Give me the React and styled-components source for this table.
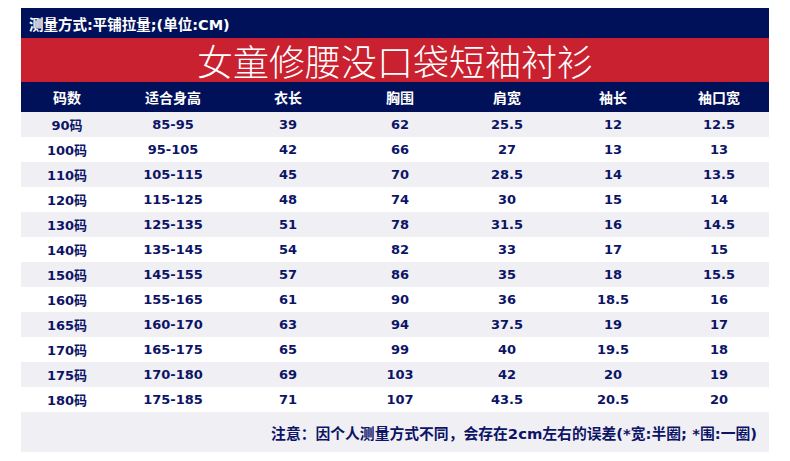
import React from 'react';
import styled, { createGlobalStyle } from 'styled-components';

const rows = [
	['90码', '85-95', '39', '62', '25.5', '12', '12.5'],
	['100码', '95-105', '42', '66', '27', '13', '13'],
	['110码', '105-115', '45', '70', '28.5', '14', '13.5'],
	['120码', '115-125', '48', '74', '30', '15', '14'],
	['130码', '125-135', '51', '78', '31.5', '16', '14.5'],
	['140码', '135-145', '54', '82', '33', '17', '15'],
	['150码', '145-155', '57', '86', '35', '18', '15.5'],
	['160码', '155-165', '61', '90', '36', '18.5', '16'],
	['165码', '160-170', '63', '94', '37.5', '19', '17'],
	['170码', '165-175', '65', '99', '40', '19.5', '18'],
	['175码', '170-180', '69', '103', '42', '20', '19'],
	['180码', '175-185', '71', '107', '43.5', '20.5', '20'],
];

const headers = ['码数', '适合身高', '衣长', '胸围', '肩宽', '袖长', '袖口宽'];

function App() {
	return (
		<>
			<GlobalStyle />
			<Chart>
				<TopBar>测量方式:平铺拉量;(单位:CM)</TopBar>
				<TitleBar>女童修腰没口袋短袖衬衫</TitleBar>
				<HeadRow>
					{headers.map(h => <HeadCell key={h}>{h}</HeadCell>)}
				</HeadRow>
				{rows.map((row, i) => (
					<DataRow key={row[0]} shaded={i % 2 === 0}>
						{row.map((val, j) => <DataCell key={j}>{val}</DataCell>)}
					</DataRow>
				))}
				<Note>注意：因个人测量方式不同，会存在2cm左右的误差(*宽:半圈; *围:一圈)</Note>
			</Chart>
		</>
	);
}

const GlobalStyle = createGlobalStyle`
	body {
		margin: 0;
		background: #fff;
		font-family: "DejaVu Sans", "Noto Sans CJK SC", sans-serif;
	}
`;

const Chart = styled.div`
	width: 748px;
	margin: 8px 0 0 21px;
`;

const TopBar = styled.div`
	height: 30px;
	background: #00115a;
	color: #fff;
	font-weight: bold;
	font-size: 14.5px;
	display: flex;
	align-items: center;
	padding-left: 8px;
`;

const TitleBar = styled.div`
	height: 44px;
	line-height: 44px;
	background: #c9212f;
	color: #fff;
	font-size: 36px;
	text-align: center;
	font-family: "Noto Sans CJK SC", sans-serif;
	font-weight: 300;
`;

const columns = '92px 120px 110px 114px 100px 112px 100px';

const HeadRow = styled.div`
	display: grid;
	grid-template-columns: ${columns};
	height: 30px;
	background: #00115a;
`;

const HeadCell = styled.div`
	display: flex;
	align-items: center;
	justify-content: center;
	color: #fff;
	font-weight: bold;
	font-size: 14px;
	font-family: "Noto Sans CJK SC", sans-serif;
`;

const DataRow = styled.div`
	display: grid;
	grid-template-columns: ${columns};
	height: 25px;
	background: ${p => (p.shaded ? '#f0f0f4' : '#fff')};
`;

const DataCell = styled.div`
	display: flex;
	align-items: center;
	justify-content: center;
	color: #0d1466;
	font-weight: bold;
	font-size: 13px;
`;

const Note = styled.div`
	height: 40px;
	background: #f0f0f4;
	color: #0d1466;
	font-weight: bold;
	font-size: 14.8px;
	display: flex;
	align-items: center;
	justify-content: flex-end;
	padding-right: 12px;
`;

export default App;
